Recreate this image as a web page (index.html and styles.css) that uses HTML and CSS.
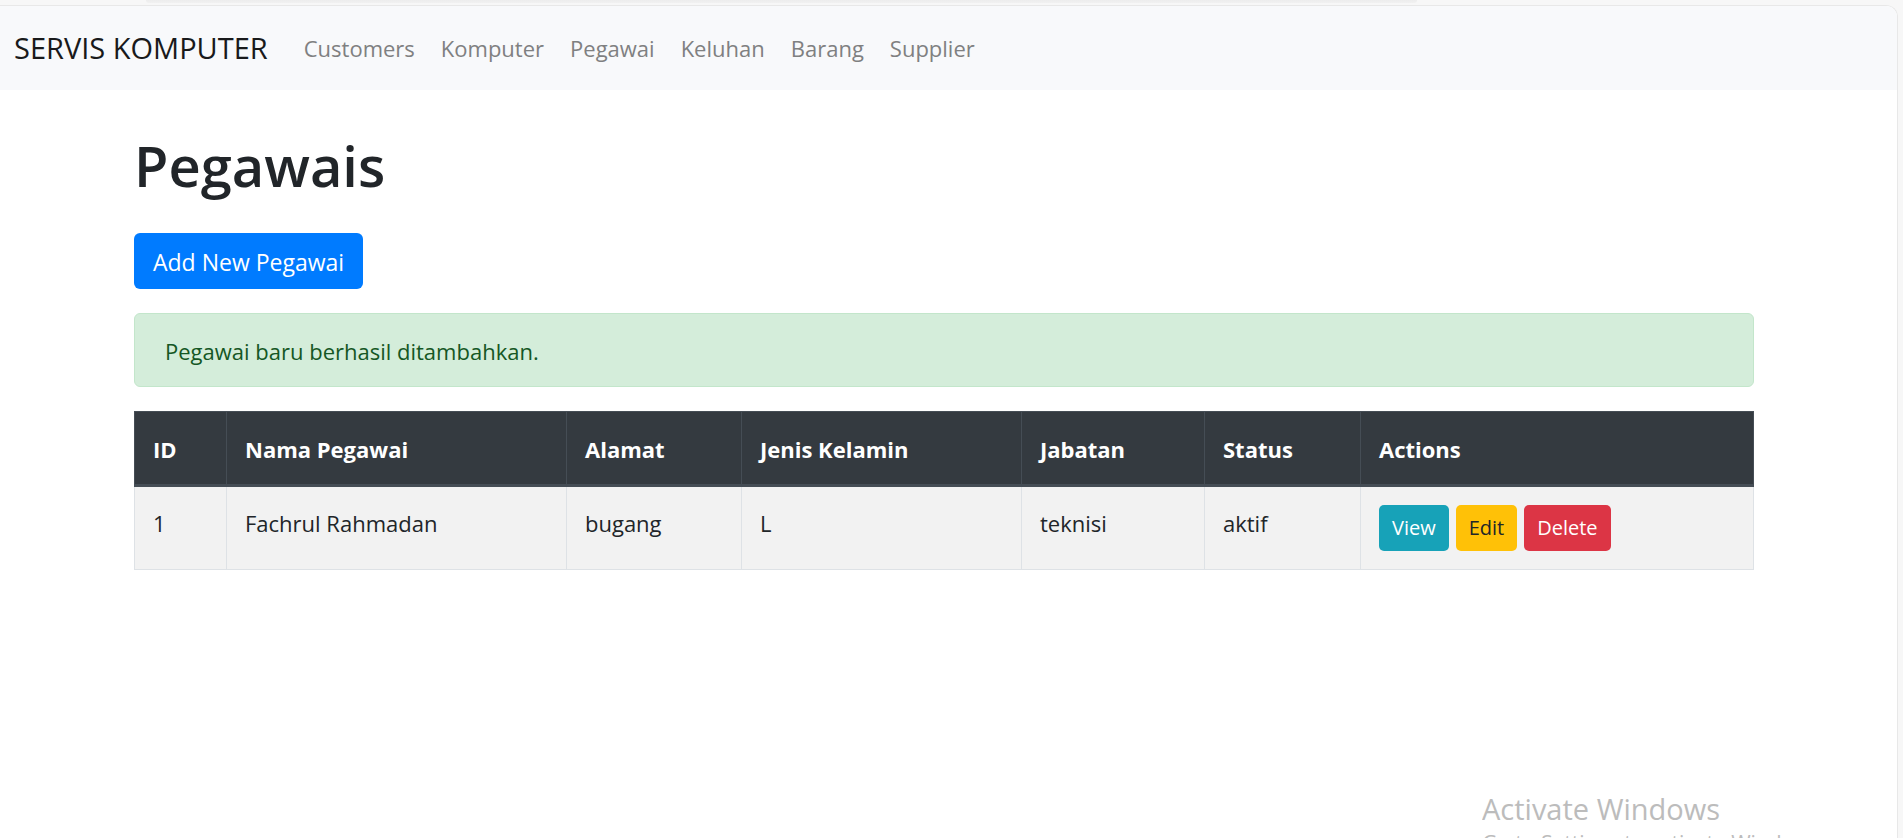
FILE: index.html
```html
<!DOCTYPE html>
<html lang="id">
<head>
<meta charset="utf-8">
<meta name="viewport" content="width=device-width, initial-scale=1">
<title>Pegawais</title>
<link rel="stylesheet" href="styles.css">
</head>
<body>
<div class="toolbar-edge"></div>
<div class="page">
  <nav class="navbar">
    <a class="brand" href="#">SERVIS KOMPUTER</a>
    <ul class="nav-list">
      <li><a class="nav-link" href="#">Customers</a></li>
      <li><a class="nav-link" href="#">Komputer</a></li>
      <li><a class="nav-link" href="#">Pegawai</a></li>
      <li><a class="nav-link" href="#">Keluhan</a></li>
      <li><a class="nav-link" href="#">Barang</a></li>
      <li><a class="nav-link" href="#">Supplier</a></li>
    </ul>
  </nav>
  <main class="content">
    <h1 class="title">Pegawais</h1>
    <a class="btn btn-primary" href="#">Add New Pegawai</a>
    <div class="alert" role="alert">Pegawai baru berhasil ditambahkan.</div>
    <table class="table">
      <colgroup>
        <col class="col-id"><col class="col-name"><col class="col-address"><col class="col-gender"><col class="col-job"><col class="col-status"><col>
      </colgroup>
      <thead>
        <tr><th>ID</th><th>Nama Pegawai</th><th>Alamat</th><th>Jenis Kelamin</th><th>Jabatan</th><th>Status</th><th>Actions</th></tr>
      </thead>
      <tbody>
        <tr>
          <td>1</td><td>Fachrul Rahmadan</td><td>bugang</td><td>L</td><td>teknisi</td><td>aktif</td>
          <td>
            <div class="actions">
              <a class="btn btn-small btn-info" href="#">View</a>
              <a class="btn btn-small btn-warning" href="#">Edit</a>
              <button class="btn btn-small btn-danger" type="button">Delete</button>
            </div>
          </td>
        </tr>
      </tbody>
    </table>
  </main>
</div>
<div class="watermark">
  <div class="watermark-title">Activate Windows</div>
  <div class="watermark-text">Go to Settings to activate Windows.</div>
</div>
</body>
</html>
```
FILE: styles.css
```css
* { box-sizing: border-box; }

body {
  display: flex;
  flex-direction: column;
  height: 100vh;
  margin: 0;
  overflow: hidden;
  background: #f7f7f7;
  color: #212529;
  font-family: "Segoe UI", "Open Sans", "Noto Sans", sans-serif;
  font-size: 22px;
  line-height: 36px;
}

.toolbar-edge {
  flex: none;
  height: 3px;
  margin: 0 486px 2px 146px;
  background: linear-gradient(#ededed, #f1f1f1);
  border-radius: 0 0 6px 6px;
}

.page {
  flex: 1;
  margin-right: 5px;
  overflow: hidden;
  background: #fff;
  border: 1px solid #e8e8e8;
  border-width: 1px 1px 0 0;
  border-top-right-radius: 12px;
}

.navbar {
  display: flex;
  align-items: center;
  gap: 36px;
  height: 84px;
  padding: 0 14px;
  background: #f8f9fb;
}

.brand {
  color: #191a1b;
  font-size: 29px;
  text-decoration: none;
}

.nav-list {
  display: flex;
  gap: 26px;
  margin: 0;
  padding: 0;
  list-style: none;
}

.nav-link {
  color: #7f8081;
  text-decoration: none;
}

.content {
  max-width: 1665px;
  margin: 0 auto;
  padding: 39px 27px 0 18px;
}

.title {
  margin: 0 0 32px;
  font-size: 56px;
  font-weight: 600;
  line-height: 72px;
}

.btn {
  display: inline-block;
  padding: 9px 18px;
  border: 1px solid transparent;
  border-radius: 6px;
  font: inherit;
  text-align: center;
  text-decoration: none;
  cursor: pointer;
}

.btn-primary {
  padding: 10px 18px 8px;
  background: #007bff;
  color: #fff;
  font-size: 23px;
}

.alert {
  margin: 24px 0;
  padding: 19px 30px 17px;
  border: 1px solid #c3e6cb;
  border-radius: 6px;
  background: #d4edda;
  color: #155724;
}

.table {
  width: 100%;
  table-layout: fixed;
  border-collapse: collapse;
}

.col-id { width: 92px; }
.col-name { width: 21%; }
.col-address { width: 175px; }
.col-gender { width: 280px; }
.col-job { width: 183px; }
.col-status { width: 156px; }

.table th,
.table td {
  padding: 18px;
  text-align: left;
  vertical-align: top;
}

.table th {
  padding: 19px 18px 17px;
  background: #343a40;
  border: 1px solid #454d55;
  border-bottom-width: 3px;
  color: #fff;
  font-weight: 700;
}

.table td {
  background: #f2f2f2;
  border: 1px solid #dee2e6;
}

.actions {
  display: flex;
  gap: 7px;
}

.btn-small {
  padding: 6px 12px;
  border-radius: 5px;
  font-size: 20px;
  line-height: 32px;
}

.btn-info { background: #17a2b8; color: #fff; }
.btn-warning { background: #ffc107; color: #212529; }
.btn-danger { background: #dc3545; color: #fff; }

/* System notice floating over the window's lower right corner */
.watermark {
  position: absolute;
  top: 789px;
  right: 81px;
  width: 340px;
  height: 49px;
  overflow: hidden;
  color: #bcbcbc;
  white-space: nowrap;
}

.watermark-title {
  font-size: 29px;
  line-height: 40px;
}

.watermark-text {
  font-size: 21px;
  line-height: 28px;
}
```
